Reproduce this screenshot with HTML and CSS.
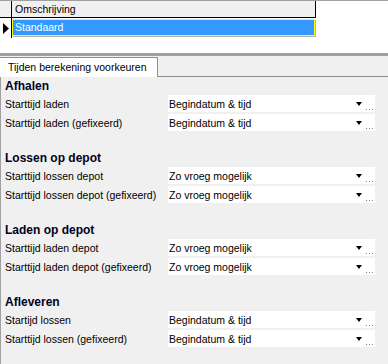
FILE: index.html
```html
<!DOCTYPE html>
<html lang="nl">
<head>
    <meta charset="UTF-8">
    <title>Tijden berekening voorkeuren</title>
    <link rel="stylesheet" href="styles.css">
</head>
<body>
    <div class="grid">
        <div class="grid-row head">
            <div class="indicator"></div>
            <div class="cell">Omschrijving</div>
        </div>
        <div class="grid-row">
            <div class="indicator">
                <svg width="6" height="11" viewBox="0 0 6 11"><polygon points="0,0 6,5.5 0,11" fill="#000"/></svg>
            </div>
            <div class="cell selected">Standaard</div>
        </div>
    </div>

    <div class="splitter"></div>

    <div class="tabs">
        <div class="tab">Tijden berekening voorkeuren</div>
    </div>

    <div class="panel">
        <div class="group">
            <h2>Afhalen</h2>
            <div class="field">
                <span class="label">Starttijd laden</span>
                <div class="combo"><span class="value">Begindatum &amp; tijd</span><span class="arrow"></span><svg class="dots" width="7" height="1"><rect x="0" width="1" height="1"/><rect x="3" width="1" height="1"/><rect x="6" width="1" height="1"/></svg></div>
            </div>
            <div class="field">
                <span class="label">Starttijd laden (gefixeerd)</span>
                <div class="combo"><span class="value">Begindatum &amp; tijd</span><span class="arrow"></span><svg class="dots" width="7" height="1"><rect x="0" width="1" height="1"/><rect x="3" width="1" height="1"/><rect x="6" width="1" height="1"/></svg></div>
            </div>
        </div>

        <div class="group">
            <h2>Lossen op depot</h2>
            <div class="field">
                <span class="label">Starttijd lossen depot</span>
                <div class="combo"><span class="value">Zo vroeg mogelijk</span><span class="arrow"></span><svg class="dots" width="7" height="1"><rect x="0" width="1" height="1"/><rect x="3" width="1" height="1"/><rect x="6" width="1" height="1"/></svg></div>
            </div>
            <div class="field">
                <span class="label">Starttijd lossen depot (gefixeerd)</span>
                <div class="combo"><span class="value">Zo vroeg mogelijk</span><span class="arrow"></span><svg class="dots" width="7" height="1"><rect x="0" width="1" height="1"/><rect x="3" width="1" height="1"/><rect x="6" width="1" height="1"/></svg></div>
            </div>
        </div>

        <div class="group">
            <h2>Laden op depot</h2>
            <div class="field">
                <span class="label">Starttijd laden depot</span>
                <div class="combo"><span class="value">Zo vroeg mogelijk</span><span class="arrow"></span><svg class="dots" width="7" height="1"><rect x="0" width="1" height="1"/><rect x="3" width="1" height="1"/><rect x="6" width="1" height="1"/></svg></div>
            </div>
            <div class="field">
                <span class="label">Starttijd laden depot (gefixeerd)</span>
                <div class="combo"><span class="value">Zo vroeg mogelijk</span><span class="arrow"></span><svg class="dots" width="7" height="1"><rect x="0" width="1" height="1"/><rect x="3" width="1" height="1"/><rect x="6" width="1" height="1"/></svg></div>
            </div>
        </div>

        <div class="group">
            <h2>Afleveren</h2>
            <div class="field">
                <span class="label">Startijd lossen</span>
                <div class="combo"><span class="value">Begindatum &amp; tijd</span><span class="arrow"></span><svg class="dots" width="7" height="1"><rect x="0" width="1" height="1"/><rect x="3" width="1" height="1"/><rect x="6" width="1" height="1"/></svg></div>
            </div>
            <div class="field">
                <span class="label">Starttijd lossen (gefixeerd)</span>
                <div class="combo"><span class="value">Begindatum &amp; tijd</span><span class="arrow"></span><svg class="dots" width="7" height="1"><rect x="0" width="1" height="1"/><rect x="3" width="1" height="1"/><rect x="6" width="1" height="1"/></svg></div>
            </div>
        </div>
    </div>
</body>
</html>
```

FILE: styles.css
```css
body {
    margin: 0;
    background: #fff;
    font-family: 'Liberation Sans', Arial, sans-serif;
    font-size: 10.5px;
    color: #000;
    border-top: 1px solid #a0a0a0;
    height: 363px;
    display: flex;
    flex-direction: column;
    overflow: hidden;
}

/* grid */
.grid {
    width: 317px;
}

.grid-row {
    display: flex;
}

.indicator {
    width: 12px;
    border-right: 1px solid #000;
    display: flex;
    align-items: center;
    padding-left: 3px;
    box-sizing: border-box;
}

.head .indicator {
    background: #f0f0f0;
    border-bottom: 1px solid #000;
}

.cell {
    flex: 1;
    padding-left: 3px;
    line-height: 16px;
}

.head .cell {
    background: #f0f0f0;
    border-right: 1px solid #000;
    border-bottom: 1px solid #000;
    margin-right: 1px;
}

.cell.selected {
    background: #3399ff;
    color: #fff;
    border: 1px solid #ffff00;
    padding-left: 2px;
    box-shadow: 1px 1px 0 #b4b4b4;
    margin: 1px 2px 2px 0;
    line-height: 15px;
}

.splitter {
    margin-top: 15px;
    height: 3px;
    background: #a0a0a0;
}

/* tabs */
.tabs {
    display: flex;
    height: 21px;
    background: #f0f0f0;
    border-bottom: 1px solid #8e8f8f;
    box-sizing: border-box;
}

.tab {
    width: 158px;
    background: #fff;
    border-top: 1px solid #8e8f8f;
    border-right: 1px solid #8e8f8f;
    margin-top: 1px;
    margin-bottom: -1px;
    padding-left: 8px;
    line-height: 19px;
    box-sizing: border-box;
}

/* panel */
.panel {
    flex: 1;
    background: #f0f0f0;
    border-left: 1px solid #a0a0a0;
    padding: 2px 13px 0 4px;
    display: flex;
    flex-direction: column;
    gap: 20px;
}

.group {
    display: flex;
    flex-direction: column;
    gap: 2px;
}

.group h2 {
    margin: 0;
    font-size: 12px;
    line-height: 14px;
    font-weight: bold;
    color: #000022;
}

.field {
    display: flex;
    align-items: center;
    height: 17px;
}

.label {
    width: 163px;
}

.combo {
    flex: 1;
    height: 17px;
    background: #fff;
    display: flex;
    align-items: center;
    position: relative;
}

.value {
    flex: 1;
    padding-left: 1px;
}

.arrow {
    width: 0;
    height: 0;
    border-left: 3.5px solid transparent;
    border-right: 3.5px solid transparent;
    border-top: 4px solid #000;
    margin-right: 13px;
    margin-top: 1px;
}

.dots {
    position: absolute;
    right: 2px;
    bottom: 2px;
    fill: #808080;
}
```
